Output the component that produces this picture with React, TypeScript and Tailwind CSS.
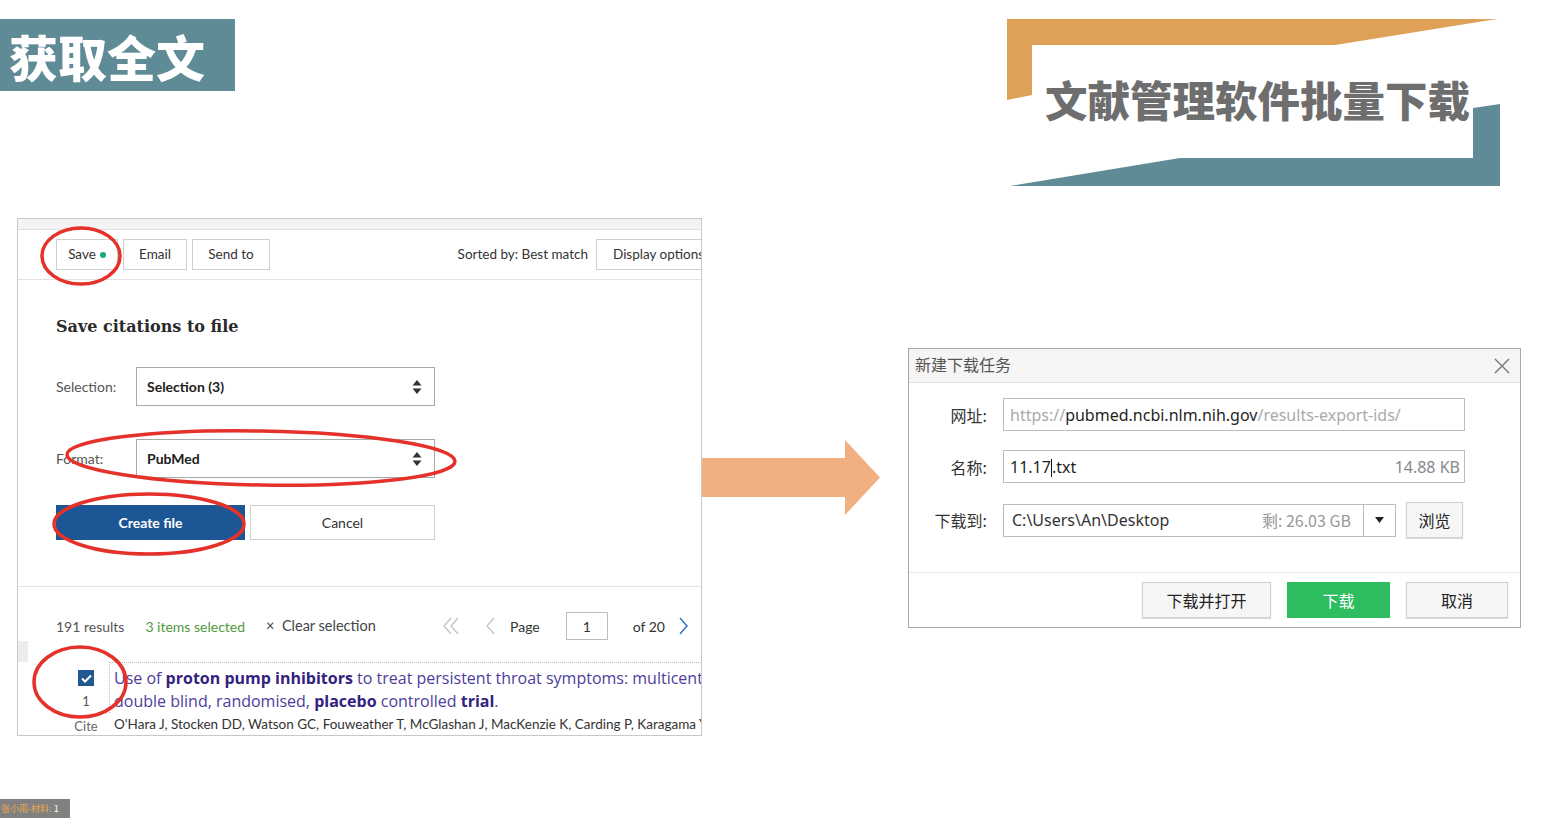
import React from 'react';

const cjk = "font-['Noto_Sans_CJK_SC',sans-serif]";
const ui = "font-['Open_Sans','Noto_Sans_CJK_SC',sans-serif]";
const narrow = "font-['Lato','Noto_Sans_CJK_SC',sans-serif]";

function SortIcon() {
  return (
    <svg width="10" height="16" viewBox="0 0 10 16" className="shrink-0">
      <path d="M5 1 L9.5 6.5 H0.5 Z" fill="#333" />
      <path d="M5 15 L9.5 9.5 H0.5 Z" fill="#333" />
    </svg>
  );
}

function Banner() {
  return (
    <div className="relative w-[493px] h-[167px] mr-[48px]">
      <svg className="absolute inset-0" width="493" height="167" viewBox="0 0 493 167">
        <polygon points="0,0 490,0 328,26 25,26 25,76 0,81" fill="#dfa058" />
        <polygon points="466,89 493,85 493,167 3,167 173,139 466,139" fill="#5f8b96" />
      </svg>
      <div className={`relative pl-[38px] pt-[59px] text-[42.5px] leading-none font-black text-[#6e6e6e] whitespace-nowrap ${cjk}`}>
        文献管理软件批量下载
      </div>
    </div>
  );
}

function Toolbar() {
  const btn = 'h-[31px] border border-[#cfcfcf] bg-white flex items-center justify-center text-[13.5px] text-[#333] whitespace-nowrap';
  return (
    <div className={`h-[50px] flex items-center px-[38px] border-b border-[#e2e2e2] ${narrow}`}>
      <div className="flex gap-[5px]">
        <div className={`${btn} w-[62px]`}>
          Save<span className="ml-[4px] w-[6px] h-[6px] rounded-full bg-[#1aa57b]" />
        </div>
        <div className={`${btn} w-[64px]`}>Email</div>
        <div className={`${btn} w-[78px]`}>Send to</div>
      </div>
      <div className="ml-auto mr-[-55px] flex items-center gap-[8px]">
        <span className="text-[13.5px] text-[#333] whitespace-nowrap">Sorted by: Best match</span>
        <div className={`${btn} w-[122px] justify-start pl-[16px]`}>Display options</div>
      </div>
    </div>
  );
}

function SelectRow({ label, value }: { label: string; value: string }) {
  return (
    <div className="flex items-center">
      <span className="w-[80px] text-[14px] text-[#555]">{label}</span>
      <div className="w-[299px] h-[39px] border border-[#a9a9a9] flex items-center justify-between pl-[10px] pr-[12px]">
        <span className="text-[14px] font-bold text-[#212121]">{value}</span>
        <SortIcon />
      </div>
    </div>
  );
}

function Pager() {
  return (
    <div className="ml-auto flex items-center text-[14px] text-[#333]">
      <svg width="18" height="20" viewBox="0 0 18 20" className="mr-[24px]">
        <path d="M8 2 L1 10 L8 18 M15 2 L8 10 L15 18" stroke="#c4c4c4" strokeWidth="1.3" fill="none" />
      </svg>
      <svg width="11" height="20" viewBox="0 0 11 20" className="mr-[14px]">
        <path d="M9 2 L2 10 L9 18" stroke="#c4c4c4" strokeWidth="1.3" fill="none" />
      </svg>
      <span>Page</span>
      <div className="ml-[26px] w-[42px] h-[28px] border border-[#bdbdbd] flex items-center justify-center">1</div>
      <span className="ml-[25px]">of 20</span>
      <svg width="11" height="20" viewBox="0 0 11 20" className="ml-[13px]">
        <path d="M2 2 L9 10 L2 18" stroke="#2f74c8" strokeWidth="1.5" fill="none" />
      </svg>
    </div>
  );
}

function ResultItem() {
  return (
    <div className="flex">
      <div className="w-[91px] shrink-0 flex">
        <div className={`ml-[52px] w-[32px] flex flex-col items-center pt-[8px] text-[13px] text-[#555] ${narrow}`}>
          <div className="w-[16px] h-[16px] bg-[#20588f] flex items-center justify-center">
            <svg width="11" height="9" viewBox="0 0 11 9">
              <path d="M1 4.5 L4 7.5 L10 1.5" stroke="white" strokeWidth="2" fill="none" />
            </svg>
          </div>
          <span className="mt-[6px] leading-[18px]">1</span>
          <span className="mt-[7px] leading-[18px] text-[#666]">Cite</span>
        </div>
      </div>
      <div className="flex-1 min-w-0 whitespace-nowrap">
        <div className="border-l border-t border-dotted border-[#bcbcbc] pl-[4px] pt-[4px] text-[16px] leading-[23px] text-[#4c3d9c]">
          <div>
            Use of <b className="text-[#33227f]">proton pump inhibitors</b> to treat persistent throat symptoms: multicentre,
          </div>
          <div>
            double blind, randomised, <b className="text-[#33227f]">placebo</b> controlled <b className="text-[#33227f]">trial</b>.
          </div>
        </div>
        <div className={`pl-[5px] text-[13.5px] leading-[22px] text-[#333] ${narrow}`}>
          O'Hara J, Stocken DD, Watson GC, Fouweather T, McGlashan J, MacKenzie K, Carding P, Karagama Y, Wood R
        </div>
      </div>
    </div>
  );
}

function PubMedPanel() {
  return (
    <div className={`relative w-[685px] h-[518px] ml-[17px] shrink-0 border border-[#c8c8c8] bg-white ${ui}`}>
      <div className="h-full overflow-hidden">
        <div className="h-[11px] bg-[#f3f3f3] border-b border-[#e0e0e0]" />
        <Toolbar />
        <div className={`pl-[38px] pt-[37px] h-[307px] border-b border-[#e4e4e4] ${narrow}`}>
          <h2 className="font-['DejaVu_Serif',serif] text-[16px] leading-[20px] font-bold text-[#2a2a2a]">
            Save citations to file
          </h2>
          <div className="mt-[30px]">
            <SelectRow label="Selection:" value="Selection (3)" />
          </div>
          <div className="mt-[33px]">
            <SelectRow label="Format:" value="PubMed" />
          </div>
          <div className="mt-[27px] flex gap-[5px]">
            <div className="w-[189px] h-[35px] bg-[#1d5694] text-white text-[14px] font-bold flex items-center justify-center">
              Create file
            </div>
            <div className="w-[185px] h-[35px] border border-[#cfcfcf] text-[14px] text-[#333] flex items-center justify-center">
              Cancel
            </div>
          </div>
        </div>
        <div className={`flex items-center pl-[38px] pr-[12px] mt-[24px] h-[30px] text-[14px] ${narrow}`}>
          <span className="text-[#555]">191 results</span>
          <span className="ml-[21px] text-[#4e9a3e]">3 items selected</span>
          <span className="ml-[21px] text-[#444] text-[14.5px]">×&nbsp; Clear selection</span>
          <Pager />
        </div>
        <div className="w-[10px] h-[21px] bg-[#ececec]" />
        <ResultItem />
      </div>
      <svg className="absolute left-0 top-0 pointer-events-none overflow-visible" width="685" height="518">
        <g fill="none" stroke="#e4322b" strokeWidth="3.5">
          <ellipse cx="63" cy="37" rx="39" ry="28" />
          <ellipse cx="243" cy="239" rx="194" ry="27" transform="rotate(1 243 239)" />
          <ellipse cx="131" cy="305" rx="95" ry="30" />
          <ellipse cx="62" cy="463" rx="46" ry="35" />
        </g>
      </svg>
    </div>
  );
}

function Arrow() {
  return (
    <svg width="178" height="75" viewBox="0 0 178 75" className="mt-[222px] shrink-0">
      <rect x="0" y="18" width="144" height="39" fill="#f0b082" />
      <polygon points="143,0 178,37.5 143,75" fill="#f0b082" />
    </svg>
  );
}

function DownloadDialog() {
  const field = 'h-[33px] border border-[#bdbdbd] bg-white flex items-center';
  const btn = 'h-[36px] border border-[#cfcfcf] bg-[#f6f6f6] flex items-center justify-center text-[16px] text-[#222] shadow-[0_1px_1px_rgba(0,0,0,0.12)]';
  return (
    <div className={`ml-[28px] mt-[130px] w-[613px] h-[280px] shrink-0 border border-[#a8a8a8] bg-white flex flex-col ${cjk}`}>
      <div className="h-[34px] bg-[#f5f5f5] border-b border-[#e2e2e2] flex items-center justify-between pl-[6px] pr-[10px] pb-[4px]">
        <span className="text-[16px] text-[#555]">新建下载任务</span>
        <svg width="16" height="16" viewBox="0 0 16 16" className="mt-[4px]">
          <path d="M1 1 L15 15 M15 1 L1 15" stroke="#777" strokeWidth="1.4" />
        </svg>
      </div>
      <div className="flex flex-col gap-[19px] pt-[15px]">
        <div className="flex items-center">
          <span className="w-[78px] text-right text-[16px] text-[#333]">网址:</span>
          <div className={`${field} ml-[16px] w-[462px] px-[6px] font-['Noto_Sans',sans-serif] text-[16px]`}>
            <span className="text-[#aaa]">https://</span>
            <span className="text-[#1f1f1f]">pubmed.ncbi.nlm.nih.gov</span>
            <span className="text-[#aaa]">/results-export-ids/</span>
          </div>
        </div>
        <div className="flex items-center">
          <span className="w-[78px] text-right text-[16px] text-[#333]">名称:</span>
          <div className={`${field} ml-[16px] w-[462px] pl-[6px] pr-[4px] justify-between font-['Noto_Sans',sans-serif] text-[16px]`}>
            <span className="text-[#1f1f1f]">
              11.17<span className="inline-block w-[1px] h-[18px] bg-[#111] align-middle" />.txt
            </span>
            <span className="text-[#888]">14.88 KB</span>
          </div>
        </div>
        <div className="flex items-center">
          <span className="w-[78px] text-right text-[16px] text-[#333]">下载到:</span>
          <div className={`${field} ml-[16px] w-[393px]`}>
            <div className="flex-1 flex items-center justify-between pl-[8px] pr-[12px] text-[16px]">
              <span className="text-[#333] font-['Noto_Sans',sans-serif]">C:\Users\An\Desktop</span>
              <span className="text-[#999]">剩: 26.03 GB</span>
            </div>
            <div className="w-[32px] h-full border-l border-[#bdbdbd] flex items-center justify-center">
              <svg width="9" height="6" viewBox="0 0 9 6">
                <path d="M0 0 H9 L4.5 6 Z" fill="#222" />
              </svg>
            </div>
          </div>
          <div className={`${btn} ml-[10px] w-[57px] h-[32px]`}>浏览</div>
        </div>
      </div>
      <div className="mt-auto border-t border-[#e6e6e6] flex justify-end gap-[16px] pt-[9px] pb-[9px] pr-[12px]">
        <div className={`${btn} w-[129px]`}>下载并打开</div>
        <div className="w-[103px] h-[36px] bg-[#2dbd5f] flex items-center justify-center text-[16px] text-white">下载</div>
        <div className={`${btn} w-[102px]`}>取消</div>
      </div>
    </div>
  );
}

export default function App() {
  return (
    <div className="w-[1548px] h-[835px] bg-white overflow-hidden flex flex-col">
      <header className="flex items-start justify-between pt-[19px]">
        <div className={`w-[235px] h-[72px] bg-[#5f8b96] flex items-center pl-[9px] text-[49px] font-black text-white leading-none ${cjk}`}>
          获取全文
        </div>
        <Banner />
      </header>
      <main className="flex items-start mt-[32px]">
        <PubMedPanel />
        <Arrow />
        <DownloadDialog />
      </main>
      <div className={`mt-[63px] w-[70px] h-[19px] bg-[#808080] flex items-center pl-[1px] text-[9px] whitespace-nowrap ${cjk}`}>
        <span className="text-[#e9a84a]">张小雨-材料: </span>
        <span className="text-white ml-[2px]">1</span>
      </div>
    </div>
  );
}
